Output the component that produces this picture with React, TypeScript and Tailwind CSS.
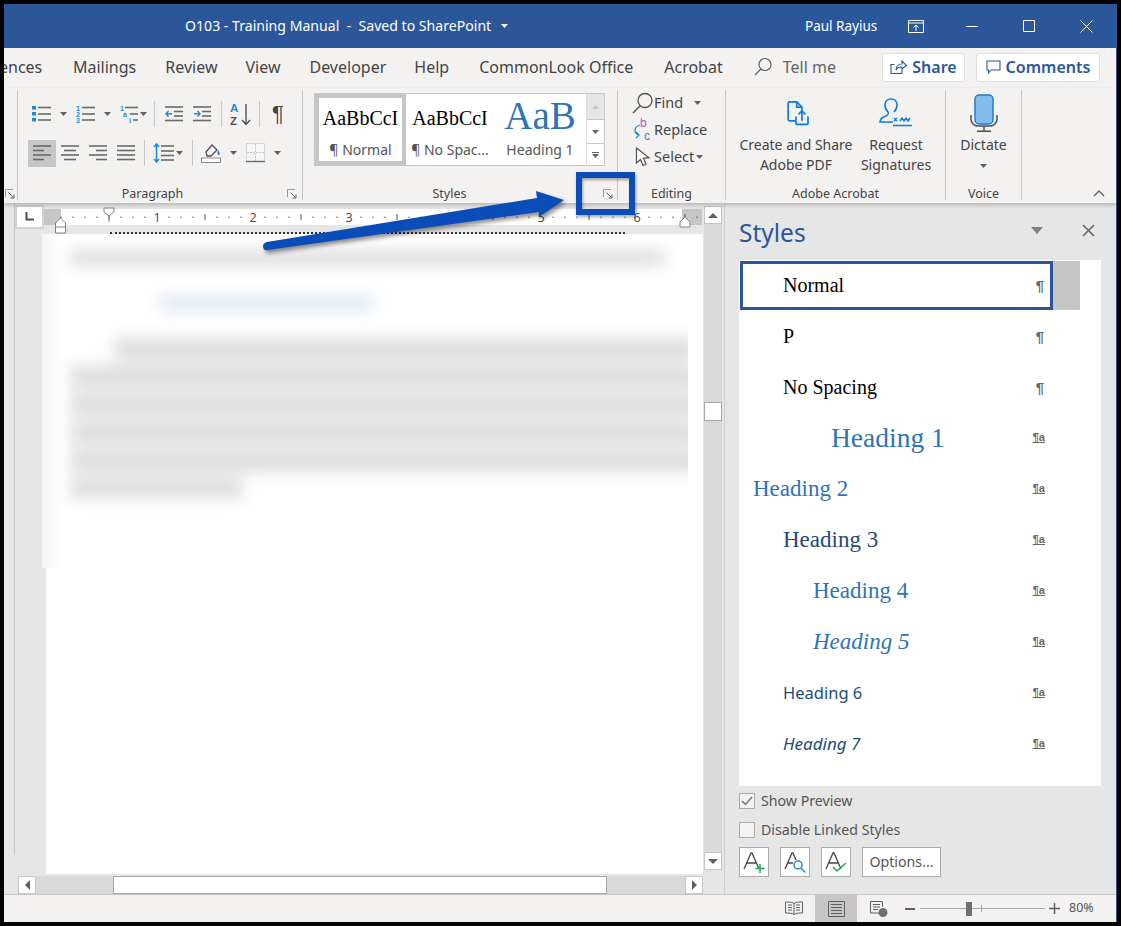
import React from 'react';

const Caret = ({ className = '' }: { className?: string }) => (
  <svg width="7" height="4" viewBox="0 0 7 4" className={className}>
    <path d="M0 0h7L3.5 4z" fill="#606060" />
  </svg>
);

const Launcher = ({ className = '' }: { className?: string }) => (
  <svg width="10" height="10" viewBox="0 0 10 10" className={className} fill="none">
    <path d="M.5 8V.5H8" stroke="#9a9a9a" />
    <path d="M3.5 3.5l5 5M5.500 9H9V5.500" stroke="#606060" />
  </svg>
);

const Lines = ({ x = 0, rows }: { x?: number; rows: [number, number, number][] }) => (
  <>
    {rows.map(([x1, x2, y], i) => (
      <path key={i} d={`M${x + x1} ${y}H${x + x2}`} stroke="#6a6a6a" strokeWidth="1.6" />
    ))}
  </>
);

const Icon = ({ w, h = 20, ml = 0, children }: { w: number; h?: number; ml?: number; children: React.ReactNode }) => (
  <svg width={w} height={h} viewBox={`0 0 ${w} ${h}`} fill="none" className="shrink-0" style={{ marginLeft: ml }}>
    {children}
  </svg>
);

const Sep = ({ ml }: { ml: number }) => <div className="w-px h-[26px] bg-[#c6c6c6] shrink-0" style={{ marginLeft: ml }} />;

const GroupLabel = ({ children, className = '' }: { children: React.ReactNode; className?: string }) => (
  <span className={`text-[12.5px] leading-[12px] text-[#444] ${className}`}>{children}</span>
);

const alignRows: Record<string, [number, number, number][]> = {
  left: [[0, 18, 3], [0, 11, 7.5], [0, 18, 12], [0, 11, 16.5]],
  center: [[0, 18, 3], [3, 15, 7.5], [0, 18, 12], [3, 15, 16.5]],
  right: [[0, 18, 3], [7, 18, 7.5], [0, 18, 12], [7, 18, 16.5]],
  justify: [[0, 18, 3], [0, 18, 7.5], [0, 18, 12], [0, 18, 16.5]],
};

const ParagraphGroup = () => (
  <div className="w-[285px] h-full border-r border-[#c6c6c6] flex flex-col shrink-0">
    <div className="flex items-center h-[22px] mt-[13px] pl-[14px]">
      <Icon w={20}>
        <rect y="2" width="4" height="3.5" fill="#1e8bd6" />
        <rect y="8" width="4" height="3.5" fill="#1e8bd6" />
        <rect y="14" width="4" height="3.5" fill="#1e8bd6" />
        <Lines x={6} rows={[[0, 13, 3.5], [0, 13, 10], [0, 13, 16]]} />
      </Icon>
      <Caret className="ml-[8px]" />
      <Icon w={19} ml={9}>
        <text x="0" y="6.5" fontSize="7" fontWeight="700" fill="#1e8bd6" fontFamily="Liberation Sans">1</text>
        <text x="0" y="12.5" fontSize="7" fontWeight="700" fill="#1e8bd6" fontFamily="Liberation Sans">2</text>
        <text x="0" y="19" fontSize="7" fontWeight="700" fill="#1e8bd6" fontFamily="Liberation Sans">3</text>
        <Lines x={6} rows={[[0, 13, 3.5], [0, 13, 10], [0, 13, 16]]} />
      </Icon>
      <Caret className="ml-[9px]" />
      <Icon w={19} ml={9}>
        <text x="0" y="6.5" fontSize="7" fontWeight="700" fill="#1e8bd6" fontFamily="Liberation Sans">1</text>
        <text x="3" y="13" fontSize="7" fontWeight="700" fill="#1e8bd6" fontFamily="Liberation Sans">a</text>
        <text x="9" y="19" fontSize="7" fontWeight="700" fill="#1e8bd6" fontFamily="Liberation Sans">i</text>
        <Lines x={5} rows={[[0, 13, 3.5], [5, 13, 10], [8, 13, 16]]} />
      </Icon>
      <Caret className="ml-[1px]" />
      <Sep ml={7} />
      <Icon w={19} ml={10}>
        <Lines rows={[[0, 18, 3], [9, 18, 7.5], [9, 18, 12], [0, 18, 16.5]]} />
        <path d="M7 9.7H1M3.5 7L1 9.7l2.5 2.7" stroke="#1e8bd6" strokeWidth="1.4" />
      </Icon>
      <Icon w={19} ml={9}>
        <Lines rows={[[0, 18, 3], [9, 18, 7.5], [9, 18, 12], [0, 18, 16.5]]} />
        <path d="M1 9.7h6M4.5 7L7 9.7l-2.5 2.7" stroke="#1e8bd6" strokeWidth="1.4" />
      </Icon>
      <Sep ml={9} />
      <Icon w={22} h={26} ml={8}>
        <text x="0" y="11" fontSize="11.5" fontWeight="700" fill="#1e8bd6" fontFamily="Liberation Sans">A</text>
        <text x="0" y="24" fontSize="11.5" fontWeight="700" fill="#505050" fontFamily="Liberation Sans">Z</text>
        <path d="M16 3v20M12 19l4 4.5 4-4.5" stroke="#505050" strokeWidth="1.4" />
      </Icon>
      <Sep ml={7} />
      <span className="ml-[12px] text-[22px] leading-none text-[#444] font-['Liberation_Sans',sans-serif]">¶</span>
    </div>
    <div className="flex items-center h-[28px] mt-[14px] pl-[10px]">
      <div className="w-[28px] h-[27px] bg-[#c6c6c6] flex items-center justify-center shrink-0">
        <Icon w={18}><Lines rows={alignRows.left} /></Icon>
      </div>
      <Icon w={18} ml={5}><Lines rows={alignRows.center} /></Icon>
      <Icon w={18} ml={10}><Lines rows={alignRows.right} /></Icon>
      <Icon w={18} ml={10}><Lines rows={alignRows.justify} /></Icon>
      <Sep ml={9} />
      <Icon w={22} ml={8}>
        <Lines x={8} rows={[[0, 13, 3], [0, 13, 8], [0, 13, 12.5], [0, 13, 17]]} />
        <path d="M3.5 1v18M1 4l2.5-3L6 4M1 16l2.5 3L6 16" stroke="#1e8bd6" strokeWidth="1.5" />
      </Icon>
      <Caret className="ml-[1px]" />
      <Sep ml={9} />
      <Icon w={21} h={22} ml={8}>
        <path d="M5 10l6-7 5 5-6 6-4 0z" stroke="#505050" strokeWidth="1.3" />
        <path d="M17 8c2 3 2 4 1 5-1 0-2-1-1-5z" fill="#1e6fb8" />
        <rect x=".5" y="16" width="19" height="4.5" fill="#fff" stroke="#8a8a8a" />
      </Icon>
      <Caret className="ml-[8px]" />
      <Icon w={20} ml={9}>
        <rect x=".5" y=".5" width="18" height="18" fill="#f6f6f6" stroke="#c6c6c6" strokeDasharray="2 1" />
        <path d="M9.5 1v18M1 9.5h18" stroke="#c6c6c6" strokeDasharray="2 1" />
        <path d="M0 18.5h19" stroke="#6a6a6a" strokeWidth="1.4" />
      </Icon>
      <Caret className="ml-[8px]" />
    </div>
    <div className="mt-auto h-[12px] flex items-center">
      <GroupLabel className="flex-1 text-center">Paragraph</GroupLabel>
      <Launcher className="mr-[5px]" />
    </div>
  </div>
);

const StylesGallery = () => (
  <div className="flex h-[73px] w-[291px] mt-[3px] ml-[11px] bg-white border border-[#c6c6c6]">
    <div className="w-[91px] h-[71px] border-[4px] border-[#c6c6c6] flex flex-col items-center shrink-0">
      <span className="mt-[6px] text-[20px] leading-[28px] text-black font-['Liberation_Serif',serif]">AaBbCcI</span>
      <span className="mt-[9px] text-[14px] leading-[18px] text-[#555]">¶ Normal</span>
    </div>
    <div className="w-[88px] flex flex-col items-center shrink-0">
      <span className="mt-[10px] text-[20px] leading-[28px] text-black font-['Liberation_Serif',serif]">AaBbCcI</span>
      <span className="mt-[9px] text-[14px] leading-[18px] text-[#555] whitespace-nowrap">¶ No Spac...</span>
    </div>
    <div className="w-[92px] flex flex-col items-center shrink-0 overflow-hidden">
      <span className="h-[37px] text-[39px] leading-[43px] text-[#2e74b5] font-['Liberation_Serif',serif]">AaB</span>
      <span className="mt-[10px] text-[14px] leading-[18px] text-[#555] whitespace-nowrap">Heading 1</span>
    </div>
    <div className="w-[18px] flex flex-col border-l border-[#dcdcdc] shrink-0">
      <div className="h-[25px] bg-[#e6e6e6] flex items-center justify-center">
        <svg width="7" height="4"><path d="M0 4h7L3.5 0z" fill="#c6c6c6" /></svg>
      </div>
      <div className="h-[25px] border-y border-[#c6c6c6] flex items-center justify-center"><Caret /></div>
      <div className="flex-1 flex flex-col items-center justify-center gap-[1px]">
        <div className="w-[7px] h-px bg-[#606060]" />
        <Caret />
      </div>
    </div>
  </div>
);

const StylesGroup = () => (
  <div className="w-[315px] h-full border-r border-[#c6c6c6] flex flex-col shrink-0">
    <StylesGallery />
    <div className="mt-auto h-[12px] flex items-center">
      <GroupLabel className="w-[293px] text-center">Styles</GroupLabel>
      <Launcher className="ml-[7px]" />
    </div>
  </div>
);

const EditingRow = ({ icon, label, caret }: { icon: React.ReactNode; label: string; caret?: string }) => (
  <div className="flex items-center h-[27px]">
    <div className="w-[24px] flex justify-center shrink-0">{icon}</div>
    <span className="text-[14.5px] text-[#444] ml-[-1px]">{label}</span>
    {caret && <Caret className={caret} />}
  </div>
);

const EditingGroup = () => (
  <div className="w-[108px] h-full border-r border-[#c6c6c6] flex flex-col pl-[13px] shrink-0">
    <div className="mt-[-1px]">
      <EditingRow
        label="Find"
        caret="ml-[11px]"
        icon={
          <Icon w={22} h={22}>
            <circle cx="13" cy="8.5" r="7" stroke="#505050" strokeWidth="1.3" />
            <path d="M8 14l-7 7" stroke="#505050" strokeWidth="1.4" />
          </Icon>
        }
      />
      <EditingRow
        label="Replace"
        icon={
          <Icon w={20} h={27}>
            <text x="7" y="11" fontSize="12" fill="#b455c8" fontFamily="Liberation Sans">b</text>
            <text x="11" y="24" fontSize="12" fill="#1e8bd6" fontFamily="Liberation Sans">c</text>
            <path d="M7 9C1 11 0 17 6 19M3 16l3 3-3 3" stroke="#1e8bd6" strokeWidth="1.3" />
          </Icon>
        }
      />
      <EditingRow
        label="Select"
        caret="ml-[2px]"
        icon={
          <Icon w={16} h={20}>
            <path d="M1.5 1v15l4-3.5 2.5 6 3-1.3-2.5-6 5.5-.5z" fill="#fff" stroke="#505050" strokeWidth="1.2" />
          </Icon>
        }
      />
    </div>
    <div className="mt-auto h-[12px] flex items-center justify-center pr-[13px]">
      <GroupLabel>Editing</GroupLabel>
    </div>
  </div>
);

const AdobeGroup = () => (
  <div className="w-[220px] h-full border-r border-[#c6c6c6] flex flex-col shrink-0">
    <div className="flex mt-[8px]">
      <div className="w-[122px] ml-[9px] flex flex-col items-center shrink-0">
        <svg width="23" height="25" viewBox="0 0 26 29" fill="none" className="mt-[3px] ml-[4px]">
          <path d="M9 23H2.5a1.5 1.5 0 0 1-1.5-1.5v-19A1.5 1.5 0 0 1 2.5 1H11l6 6v6" stroke="#0f7ae5" strokeWidth="2" />
          <path d="M11 1v6h6" stroke="#0f7ae5" strokeWidth="2" />
          <path d="M10 18v8a1 1 0 0 0 1 1h12a1 1 0 0 0 1-1v-8M17 23v-11M13 15.5l4-4 4 4" stroke="#0f7ae5" strokeWidth="2" />
        </svg>
        <span className="mt-[9px] text-[14px] leading-[20px] text-[#444] text-center whitespace-nowrap">Create and Share<br />Adobe PDF</span>
      </div>
      <div className="w-[78px] flex flex-col items-center shrink-0">
        <svg width="34" height="29" viewBox="0 0 34 29" fill="none">
          <path d="M12 1c-4 0-6 3-6 6 0 3 1 5 3 7 1 1 0 3-2 4-3 1-6 2-6 6h13" stroke="#0f7ae5" strokeWidth="1.6" />
          <path d="M12 1c4 0 6 3 6 6 0 3-1 5-3 7" stroke="#0f7ae5" strokeWidth="1.6" />
          <path d="M15 20l3 3m0-3l-3 3M21 23l2-3 2 3 2-3 2 3 2-3M14 27.5h19" stroke="#0f7ae5" strokeWidth="1.5" />
        </svg>
        <span className="mt-[8px] text-[14px] leading-[20px] text-[#444] text-center">Request<br />Signatures</span>
      </div>
    </div>
    <div className="mt-auto h-[12px] flex items-center justify-center">
      <GroupLabel>Adobe Acrobat</GroupLabel>
    </div>
  </div>
);

const VoiceGroup = () => (
  <div className="w-[76px] h-full border-r border-[#c6c6c6] flex flex-col items-center shrink-0">
    <svg width="28" height="38" viewBox="0 0 28 38" fill="none" className="mt-[4px]">
      <rect x="5" y="1" width="18" height="29" rx="4" fill="#83bcec" stroke="#1e7fd0" strokeWidth="1.5" />
      <path d="M1 21v4c0 4 3 7 7 7h12c4 0 7-3 7-7v-4M14 32v5M7 37.2h14" stroke="#505050" strokeWidth="1.5" />
    </svg>
    <span className="mt-[3px] text-[14px] leading-[20px] text-[#444]">Dictate</span>
    <Caret className="mt-[9px]" />
    <div className="mt-auto h-[12px] flex items-center">
      <GroupLabel>Voice</GroupLabel>
    </div>
  </div>
);

const Ribbon = () => (
  <div className="h-[115px] bg-[#f3f2f1] flex shrink-0 pt-[2px] pb-[3px] shadow-[0_2px_4px_rgba(0,0,0,0.22)] z-10">
    <div className="w-[14px] h-full border-r border-[#c6c6c6] flex items-end justify-end shrink-0">
      <Launcher className="mb-[1px] mr-[2px]" />
    </div>
    <ParagraphGroup />
    <StylesGroup />
    <EditingGroup />
    <AdobeGroup />
    <VoiceGroup />
    <div className="flex-1 flex items-end justify-end pr-[11px] pb-[3px]">
      <svg width="12" height="7" fill="none"><path d="M1 6l5-5 5 5" stroke="#606060" strokeWidth="1.4" /></svg>
    </div>
  </div>
);

const tabs = [
  { label: 'Mailings', ml: 'ml-[31px]' },
  { label: 'Review', ml: 'ml-[29px]' },
  { label: 'View', ml: 'ml-[28px]' },
  { label: 'Developer', ml: 'ml-[29px]' },
  { label: 'Help', ml: 'ml-[28px]' },
  { label: 'CommonLook Office', ml: 'ml-[30px]' },
  { label: 'Acrobat', ml: 'ml-[31px]' },
];

const TabRow = () => (
  <div className="h-[40px] bg-[#f3f2f1] flex items-center text-[16px] text-[#444] shrink-0 overflow-hidden pb-[3px]">
    <span className="ml-[-5px] w-[43px]">ences</span>
    {tabs.map((t) => (
      <span key={t.label} className={t.ml}>{t.label}</span>
    ))}
    <svg width="18" height="20" viewBox="0 0 18 20" fill="none" className="ml-[31px]">
      <circle cx="11" cy="7.5" r="6" stroke="#606060" strokeWidth="1.2" />
      <path d="M7 12l-6 6" stroke="#606060" strokeWidth="1.3" />
    </svg>
    <span className="ml-[11px] text-[#666]">Tell me</span>
    <div className="ml-auto mr-[16px] mt-[1px] flex gap-[11px]">
      <button className="w-[83px] h-[29px] bg-white border border-[#e1dfdd] rounded-[3px] flex items-center justify-center gap-[5px] text-[#2b579a] font-semibold">
        <svg width="17" height="16" viewBox="0 0 17 16" fill="none">
          <path d="M12 8.5V14.5H1V5.500h3.500M6 11c0-4 3-6 6-6V2l4.500 4.500L12 10V8c-3 0-5 1-6 3z" stroke="#2b579a" strokeWidth="1.100" />
        </svg>
        Share
      </button>
      <button className="w-[124px] h-[29px] bg-white border border-[#e1dfdd] rounded-[3px] flex items-center justify-center gap-[5px] text-[#2b579a] font-semibold">
        <svg width="15" height="14" viewBox="0 0 15 14" fill="none">
          <path d="M1 1h13v9H5l-2.500 3V10H1z" stroke="#2b579a" strokeWidth="1.100" />
        </svg>
        Comments
      </button>
    </div>
  </div>
);

const TitleBar = () => (
  <div className="h-[44px] bg-[#2b579a] flex items-center text-white text-[14.1px] shrink-0">
    <span className="ml-[181px] w-[307px] whitespace-pre">O103 - Training Manual  -  Saved to SharePoint</span>
    <svg width="7" height="4" className="ml-[9px]"><path d="M0 0h7L3.500 4z" fill="#fff" /></svg>
    <span className="ml-[297px] w-[73px] text-[13.5px] whitespace-nowrap">Paul Rayius</span>
    <svg width="16" height="13" viewBox="0 0 16 13" fill="none" className="ml-[30px]">
      <path d="M.5 .5h15v12H.5zM.5 3h15M8 11V5M5.500 7.500L8 5l2.500 2.500" stroke="#fff" />
    </svg>
    <svg width="12" height="1" className="ml-[42px]"><path d="M0 .5h12" stroke="#fff" /></svg>
    <svg width="12" height="12" className="ml-[45px]" fill="none"><path d="M.5 .5h11v11H.5z" stroke="#fff" /></svg>
    <svg width="13" height="13" className="ml-[45px]" fill="none"><path d="M.5 .500l12 12m0-12l-12 12" stroke="#fff" /></svg>
  </div>
);

const Ruler = () => (
  <div className="flex items-center h-[21px]">
    <div className="w-[29px] h-[24px] ml-[-4px] bg-[#d2d2d2] p-[2px] shrink-0">
      <div className="w-full h-full bg-white flex items-center justify-center">
        <svg width="9" height="9" fill="none"><path d="M1.500 0v7.500H9" stroke="#505050" strokeWidth="2" /></svg>
      </div>
    </div>
    <svg width="659" height="30" viewBox="0 0 659 30" className="shrink-0 self-start relative z-[1]">
      <rect x="0" y="3" width="658" height="16" fill="#c6c6c6" />
      <rect x="17" y="3" width="621" height="16" fill="#fff" />
      {Array.from({ length: 55 }, (_, i) => {
        const x = 17 + i * 12;
        if (i % 8 === 0 && i > 0) return null;
        const major = i % 8 === 4;
        return <path key={i} d={major ? `M${x} 8v6` : `M${x} 10.500v1.500`} stroke="#555" />;
      })}
      {[1, 2, 3, 4, 5, 6].map((n) => (
        <text key={n} x={17 + n * 96} y="16" fontSize="12.500" fill="#444" textAnchor="middle" fontFamily="Open Sans">{n}</text>
      ))}
      <path d="M60 2h10v4l-5 4-5-4zM65 10v6" fill="#fff" stroke="#808080" />
      <path d="M16.500 12l5 5v10h-10V17zM11.500 21h10" fill="#fff" stroke="#808080" />
      <path d="M641 11l5 5v5h-10v-5z" fill="#fff" stroke="#808080" />
    </svg>
  </div>
);

const blurLines = [
  'h-[14px] mt-[17px] ml-[28px] w-[594px] bg-[#d8d8d8]',
  'h-[14px] mt-[31px] ml-[118px] w-[214px] bg-[#d9e6f5]',
  'h-[22px] mt-[28px] ml-[73px] w-[580px] bg-[#dcdcdc]',
  'h-[22px] mt-[6px] ml-[28px] w-[630px] bg-[#dcdcdc]',
  'h-[22px] mt-[6px] ml-[28px] w-[630px] bg-[#dcdcdc]',
  'h-[22px] mt-[6px] ml-[28px] w-[630px] bg-[#dcdcdc]',
  'h-[22px] mt-[6px] ml-[28px] w-[630px] bg-[#dcdcdc]',
  'h-[20px] mt-[6px] ml-[28px] w-[172px] bg-[#dcdcdc]',
];

const Document = () => (
  <div className="flex-1 flex flex-col min-h-0 relative">
    <div className="h-[7px] bg-[#e6e6e6] shrink-0 ml-[31px] flex items-end overflow-hidden">
      <div className="ml-[64px] w-[515px] border-b-2 border-dotted border-[#333]" />
    </div>
    <div className="flex-1 bg-white ml-[31px] relative">
      <div className="w-[646px] h-[334px] ml-[-4px] overflow-hidden bg-gradient-to-r from-[#f5f5f5] to-white to-[3%]">
        <div className="blur-[8px] flex flex-col">
          {blurLines.map((cls) => (
            <div key={cls} className={cls} />
          ))}
        </div>
      </div>
    </div>
  </div>
);

const VScrollBar = () => (
  <div className="w-[18px] ml-px flex flex-col bg-[#d9d9d9] shrink-0 mt-[3px] h-[664px]">
    <div className="h-[18px] bg-white border border-[#c6c6c6] flex items-center justify-center">
      <svg width="10" height="5"><path d="M0 5h10L5 0z" fill="#606060" /></svg>
    </div>
    <div className="h-[19px] mt-[178px] bg-white border border-[#a6a6a6]" />
    <div className="h-[18px] mt-auto bg-white border border-[#c6c6c6] flex items-center justify-center">
      <svg width="10" height="5"><path d="M0 0h10L5 5z" fill="#606060" /></svg>
    </div>
  </div>
);

const HScrollBar = () => (
  <div className="h-[18px] mt-[2px] ml-[3px] flex w-[685px] bg-[#d9d9d9] shrink-0">
    <div className="w-[18px] bg-white border border-[#c6c6c6] flex items-center justify-center">
      <svg width="5" height="10"><path d="M5 0v10L0 5z" fill="#606060" /></svg>
    </div>
    <div className="w-[494px] ml-[77px] bg-white border border-[#a6a6a6]" />
    <div className="w-[18px] ml-auto bg-white border border-[#c6c6c6] flex items-center justify-center">
      <svg width="5" height="10"><path d="M0 0v10l5-5z" fill="#606060" /></svg>
    </div>
  </div>
);

const serif = "font-['Liberation_Serif',serif]";

const styleRows = [
  { name: 'Normal', cls: `pl-[43px] text-[20px] text-black ${serif}`, linked: false },
  { name: 'P', cls: `pl-[43px] text-[20px] text-black ${serif}`, linked: false },
  { name: 'No Spacing', cls: `pl-[43px] text-[20px] text-black ${serif}`, linked: false },
  { name: 'Heading 1', cls: `pl-[91px] text-[27.5px] text-[#2e74b5] ${serif}`, linked: true },
  { name: 'Heading 2', cls: `pl-[13px] text-[23px] text-[#2e74b5] ${serif}`, linked: true },
  { name: 'Heading 3', cls: `pl-[43px] text-[23px] text-[#1f4d78] ${serif}`, linked: true },
  { name: 'Heading 4', cls: `pl-[73px] text-[23px] text-[#2e74b5] ${serif}`, linked: true },
  { name: 'Heading 5', cls: `pl-[73px] text-[23px] italic text-[#2e74b5] ${serif}`, linked: true },
  { name: 'Heading 6', cls: 'pl-[43px] text-[16.5px] text-[#1f4d78]', linked: true },
  { name: 'Heading 7', cls: 'pl-[43px] text-[17px] italic text-[#1f4d78]', linked: true },
];

const StyleRow = ({ row, selected }: { row: (typeof styleRows)[number]; selected: boolean }) => (
  <div className="h-[51px] flex items-center relative">
    <div className={`w-[313px] h-[49px] flex items-center shrink-0 ml-px ${selected ? 'border-[3px] border-[#2b579a]' : ''}`}>
      <span className={`flex-1 whitespace-nowrap mt-[-1px] ${row.cls} ${selected ? 'ml-[-3px]' : ''}`}>{row.name}</span>
      {row.linked ? (
        <span className="mr-[8px] mb-[2px] text-[11px] font-bold underline text-[#666] leading-none font-['Liberation_Sans',sans-serif]">¶a</span>
      ) : (
        <span className={`text-[15px] font-bold text-[#666] leading-none font-['Liberation_Sans',sans-serif] ${selected ? 'mr-[6px]' : 'mr-[9px]'}`}>¶</span>
      )}
    </div>
    {selected && <div className="w-[27px] h-[49px] bg-[#c6c6c6]" />}
  </div>
);

const StyleIconButton = ({ children }: { children: React.ReactNode }) => (
  <div className="w-[30px] h-[30px] bg-white border border-[#ababab] flex items-center justify-center shrink-0">
    <svg width="24" height="24" viewBox="0 0 24 24" fill="none">{children}</svg>
  </div>
);

const StylesPane = () => (
  <div className="w-[392px] bg-[#e6e6e6] border-l border-[#cfcfcf] ml-[2px] flex flex-col shrink-0 pl-[14px]">
    <div className="h-[57px] flex items-center shrink-0">
      <span className="text-[24.5px] text-[#2b579a] mt-[4px]">Styles</span>
      <svg width="12" height="7" className="ml-auto mb-[2px]"><path d="M0 0h12L6 7z" fill="#808080" /></svg>
      <svg width="13" height="13" fill="none" className="ml-[39px] mr-[21px] mb-[2px]">
        <path d="M1 1l11 11m0-11L1 12" stroke="#606060" strokeWidth="1.500" />
      </svg>
    </div>
    <div className="w-[362px] h-[526px] bg-white shrink-0">
      {styleRows.map((r, i) => (
        <StyleRow key={r.name} row={r} selected={i === 0} />
      ))}
    </div>
    <div className="flex items-center h-[16px] mt-[7px] text-[14.2px] text-[#555]">
      <div className="w-[16px] h-[16px] bg-[#f3f3f3] border border-[#ababab] flex items-center justify-center">
        <svg width="12" height="10" fill="none"><path d="M1 5l3.500 3.500L11 1" stroke="#777" strokeWidth="1.500" /></svg>
      </div>
      <span className="ml-[6px]">Show Preview</span>
    </div>
    <div className="flex items-center h-[16px] mt-[13px] text-[14.2px] text-[#555]">
      <div className="w-[16px] h-[16px] bg-[#f3f3f3] border border-[#ababab]" />
      <span className="ml-[6px]">Disable Linked Styles</span>
    </div>
    <div className="flex mt-[9px] gap-[11px]">
      <StyleIconButton>
        <path d="M2 19L9 3h1l7 16M5 13h10" stroke="#444" strokeWidth="1.300" />
        <path d="M18 14v9M13.500 18.500h9" stroke="#1fa84f" strokeWidth="1.500" />
      </StyleIconButton>
      <StyleIconButton>
        <path d="M2 19L9 3h1l3 7M5 13h5" stroke="#444" strokeWidth="1.300" />
        <circle cx="15" cy="15" r="4" stroke="#1e8bd6" strokeWidth="1.500" />
        <path d="M18 18l4.500 4.500" stroke="#1e8bd6" strokeWidth="1.500" />
      </StyleIconButton>
      <StyleIconButton>
        <path d="M2 19L9 3h1l7 16M5 13h10" stroke="#444" strokeWidth="1.300" />
        <path d="M9 17l4 4 9-8" stroke="#1fa84f" strokeWidth="1.500" />
      </StyleIconButton>
      <button className="w-[79px] h-[30px] bg-white border border-[#ababab] text-[14.2px] text-[#555]">Options...</button>
    </div>
  </div>
);

const StatusBar = () => (
  <div className="h-[28px] bg-[#f3f2f1] border-t border-[#c6c6c6] flex items-center shrink-0 z-10">
    <svg width="18" height="15" viewBox="0 0 18 15" fill="none" className="ml-[781px]">
      <path d="M9 2.500C7 1 4 1 .5 1v11c3.500 0 6.500 0 8.500 1.500 2-1.500 5-1.500 8.500-1.500V1C14 1 11 1 9 2.500zM9 2.500v11M3 4h4M3 6.500h4M3 9h4M11 4h4M11 6.500h4M11 9h4" stroke="#606060" />
    </svg>
    <div className="w-[42px] h-[28px] bg-[#c8c6c4] ml-[12px] flex items-center justify-center">
      <svg width="17" height="16" fill="none">
        <path d="M.5 .500h16v15H.5zM3 3.500h11M3 6.500h11M3 9.500h11M3 12.500h11" stroke="#606060" />
      </svg>
    </div>
    <svg width="18" height="16" viewBox="0 0 18 16" fill="none" className="ml-[13px]">
      <path d="M11 12H.5V.500h12V6M3 3.500h7M3 6h7M3 8.500h5" stroke="#606060" />
      <circle cx="13" cy="11.500" r="4.500" fill="#707070" />
    </svg>
    <div className="w-[10px] h-[2px] bg-[#606060] ml-[17px]" />
    <div className="w-[125px] h-px bg-[#a6a6a6] ml-[5px] flex items-center">
      <div className="w-[6px] h-[14px] bg-[#707070] ml-[46px] shrink-0" />
      <div className="w-px h-[7px] bg-[#a6a6a6] ml-[9px] shrink-0" />
    </div>
    <svg width="11" height="11" className="ml-[4px]"><path d="M5.500 0v11M0 5.500h11" stroke="#606060" strokeWidth="1.500" /></svg>
    <span className="ml-[9px] text-[12.5px] text-[#555]">80%</span>
  </div>
);

// callout drawn on top of the screenshot
const Overlay = () => (
  <>
    <svg width="320" height="80" viewBox="0 0 320 80" fill="none" className="absolute left-[256px] top-[176px] z-20 drop-shadow-[2px_3px_2px_rgba(0,0,0,0.45)]">
      <path d="M7 62L277 18 276 11 304 20 279 37 279 32 8 70Q3 71 3 66 3 63 7 62z" fill="#0b4db8" />
    </svg>
    <div className="absolute left-[572px] top-[168px] w-[59px] h-[43px] border-[6px] border-[#0b4db8] z-20 shadow-[1px_2px_3px_rgba(0,0,0,0.35),inset_1px_2px_3px_rgba(0,0,0,0.35)]" />
  </>
);

export default function App() {
  return (
    <div className="w-[1121px] h-[926px] bg-black p-[4px] font-['Noto_Sans',sans-serif]">
      <div className="w-full h-full flex flex-col relative overflow-hidden border-r border-[#2b579a] bg-[#e6e6e6]">
        <TitleBar />
        <TabRow />
        <Ribbon />
        <div className="flex-1 flex min-h-0 bg-[#e6e6e6]">
          <div className="w-[11px] border-r border-[#c6c6c6] h-[652px] shrink-0" />
          <div className="w-[707px] flex flex-col shrink-0">
            <div className="flex flex-1 min-h-0">
              <div className="flex-1 flex flex-col min-w-0 pt-[3px]">
                <div className="pl-[4px]"><Ruler /></div>
                <Document />
              </div>
              <VScrollBar />
            </div>
            <HScrollBar />
          </div>
          <StylesPane />
        </div>
        <StatusBar />
        <Overlay />
      </div>
    </div>
  );
}
